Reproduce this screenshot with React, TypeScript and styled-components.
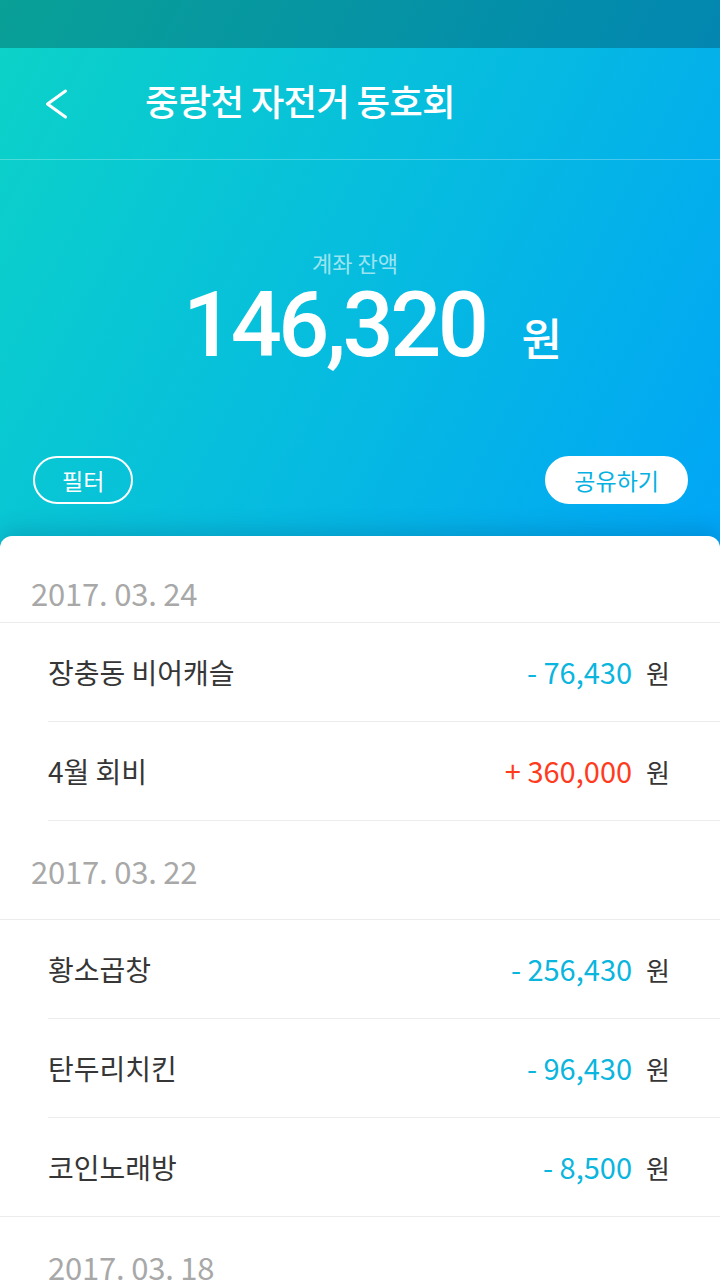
import React from "react";
import styled, { createGlobalStyle } from "styled-components";

const GlobalStyle = createGlobalStyle`
  html, body {
    margin: 0;
    padding: 0;
    background: #ffffff;
  }
  body {
    font-family: "Noto Sans CJK KR", "Noto Sans", sans-serif;
    -webkit-font-smoothing: antialiased;
  }
  * { box-sizing: border-box; }
`;

const Page = styled.div`
  width: 720px;
  min-height: 1280px;
  overflow: hidden;
  background: #ffffff;
`;

const Top = styled.div`
  height: 548px;
  display: flex;
  flex-direction: column;
  background: linear-gradient(118deg, #0cd3c7 0%, #07bfdc 45%, #01a5f6 100%);
`;

const StatusBar = styled.div`
  height: 48px;
  flex: none;
  background: rgba(0, 0, 0, 0.24);
`;

const Header = styled.header`
  height: 112px;
  flex: none;
  display: flex;
  align-items: center;
  padding-left: 44px;
  border-bottom: 1px solid rgba(255, 255, 255, 0.28);
`;

const BackButton = styled.button`
  width: 24px;
  height: 32px;
  padding: 0;
  border: none;
  background: transparent;
  display: flex;
  align-items: center;
  justify-content: center;
  cursor: pointer;
`;

const Title = styled.h1`
  margin: 0 0 0 77px;
  padding-bottom: 6px;
  font-size: 36.5px;
  line-height: 44px;
  font-weight: 500;
  color: #ffffff;
  letter-spacing: -0.8px;
`;

const Hero = styled.section`
  flex: 1;
  display: flex;
  flex-direction: column;
  align-items: center;
  padding-top: 91px;
`;

const BalanceLabel = styled.div`
  font-size: 22px;
  line-height: 22px;
  color: rgba(255, 255, 255, 0.62);
  margin-right: 10px;
`;

const Balance = styled.div`
  display: flex;
  align-items: baseline;
  margin-top: 8px;
  padding-left: 25px;
  color: #ffffff;
`;

const BalanceNumber = styled.span`
  font-family: Roboto, "Noto Sans", sans-serif;
  font-size: 90px;
  line-height: 90px;
  font-weight: 500;
  letter-spacing: -3.5px;
`;

const BalanceUnit = styled.span`
  margin-left: 36px;
  font-size: 44px;
  line-height: 44px;
  font-weight: 500;
`;

const Actions = styled.div`
  align-self: stretch;
  display: flex;
  justify-content: space-between;
  margin-top: 85px;
  padding: 0 32px 0 33px;
`;

const PillButton = styled.button<{ $solid?: boolean }>`
  height: 48px;
  padding: 0 27px;
  border-radius: 24px;
  border: 2px solid #ffffff;
  background: ${(p) => (p.$solid ? "#ffffff" : "transparent")};
  color: ${(p) => (p.$solid ? "#06b1e2" : "#ffffff")};
  font-family: "Noto Sans CJK KR", sans-serif;
  font-size: 23px;
  line-height: 1;
  cursor: pointer;
`;

const Card = styled.main`
  position: relative;
  margin-top: -12px;
  background: #ffffff;
  border-radius: 12px 12px 0 0;
  box-shadow: 0 -6px 22px rgba(0, 40, 90, 0.2);
`;

const DateHeader = styled.div<{ $height: number; $pt: number; $indent: number; $line: boolean }>`
  height: ${(p) => p.$height}px;
  display: flex;
  align-items: center;
  padding-top: ${(p) => p.$pt}px;
  padding-left: ${(p) => p.$indent}px;
  border-bottom: 1px solid ${(p) => (p.$line ? "#ececec" : "transparent")};
  font-size: 31px;
  line-height: 36px;
  color: #a8a8a8;
  letter-spacing: -0.2px;
`;

const Row = styled.div<{ $full?: boolean }>`
  height: 99px;
  display: flex;
  align-items: center;
  justify-content: space-between;
  margin-left: ${(p) => (p.$full ? "0" : "48px")};
  padding-left: ${(p) => (p.$full ? "48px" : "0")};
  padding-right: 50px;
  border-bottom: 1px solid #ececec;
`;

const Name = styled.span`
  font-size: 28px;
  line-height: 34px;
  color: #363636;
`;

const AmountWrap = styled.span`
  display: flex;
  align-items: baseline;
`;

const Amount = styled.span<{ $plus?: boolean }>`
  font-size: 29px;
  line-height: 34px;
  color: ${(p) => (p.$plus ? "#ff3b1d" : "#0ab5de")};
`;

const Unit = styled.span`
  margin-left: 14px;
  font-size: 26px;
  line-height: 34px;
  color: #363636;
`;

type Tx = { name: string; amount: string; plus?: boolean; full?: boolean };

const groups: {
  date: string;
  height: number;
  pt: number;
  indent: number;
  line: boolean;
  items: Tx[];
}[] = [
  {
    date: "2017. 03. 24",
    height: 87,
    pt: 27,
    indent: 31,
    line: true,
    items: [
      { name: "장충동 비어캐슬", amount: "- 76,430" },
      { name: "4월 회비", amount: "+ 360,000", plus: true },
    ],
  },
  {
    date: "2017. 03. 22",
    height: 99,
    pt: 2,
    indent: 31,
    line: true,
    items: [
      { name: "황소곱창", amount: "- 256,430" },
      { name: "탄두리치킨", amount: "- 96,430" },
      { name: "코인노래방", amount: "- 8,500", full: true },
    ],
  },
  {
    date: "2017. 03. 18",
    height: 99,
    pt: 2,
    indent: 48,
    line: false,
    items: [],
  },
];

export default function App() {
  return (
    <Page>
      <GlobalStyle />
      <Top>
        <StatusBar />
        <Header>
          <BackButton aria-label="뒤로">
            <svg width="24" height="32" viewBox="0 0 24 32" fill="none">
              <path
                d="M21.5 3 L3.5 16 L21.5 29"
                stroke="#ffffff"
                strokeWidth="3"
                strokeLinecap="round"
                strokeLinejoin="round"
              />
            </svg>
          </BackButton>
          <Title>중랑천 자전거 동호회</Title>
        </Header>
        <Hero>
          <BalanceLabel>계좌 잔액</BalanceLabel>
          <Balance>
            <BalanceNumber>146,320</BalanceNumber>
            <BalanceUnit>원</BalanceUnit>
          </Balance>
          <Actions>
            <PillButton>필터</PillButton>
            <PillButton $solid>공유하기</PillButton>
          </Actions>
        </Hero>
      </Top>
      <Card>
        {groups.map((g) => (
          <React.Fragment key={g.date}>
            <DateHeader $height={g.height} $pt={g.pt} $indent={g.indent} $line={g.line}>
              {g.date}
            </DateHeader>
            {g.items.map((t) => (
              <Row key={t.name} $full={t.full}>
                <Name>{t.name}</Name>
                <AmountWrap>
                  <Amount $plus={t.plus}>{t.amount}</Amount>
                  <Unit>원</Unit>
                </AmountWrap>
              </Row>
            ))}
          </React.Fragment>
        ))}
      </Card>
    </Page>
  );
}
